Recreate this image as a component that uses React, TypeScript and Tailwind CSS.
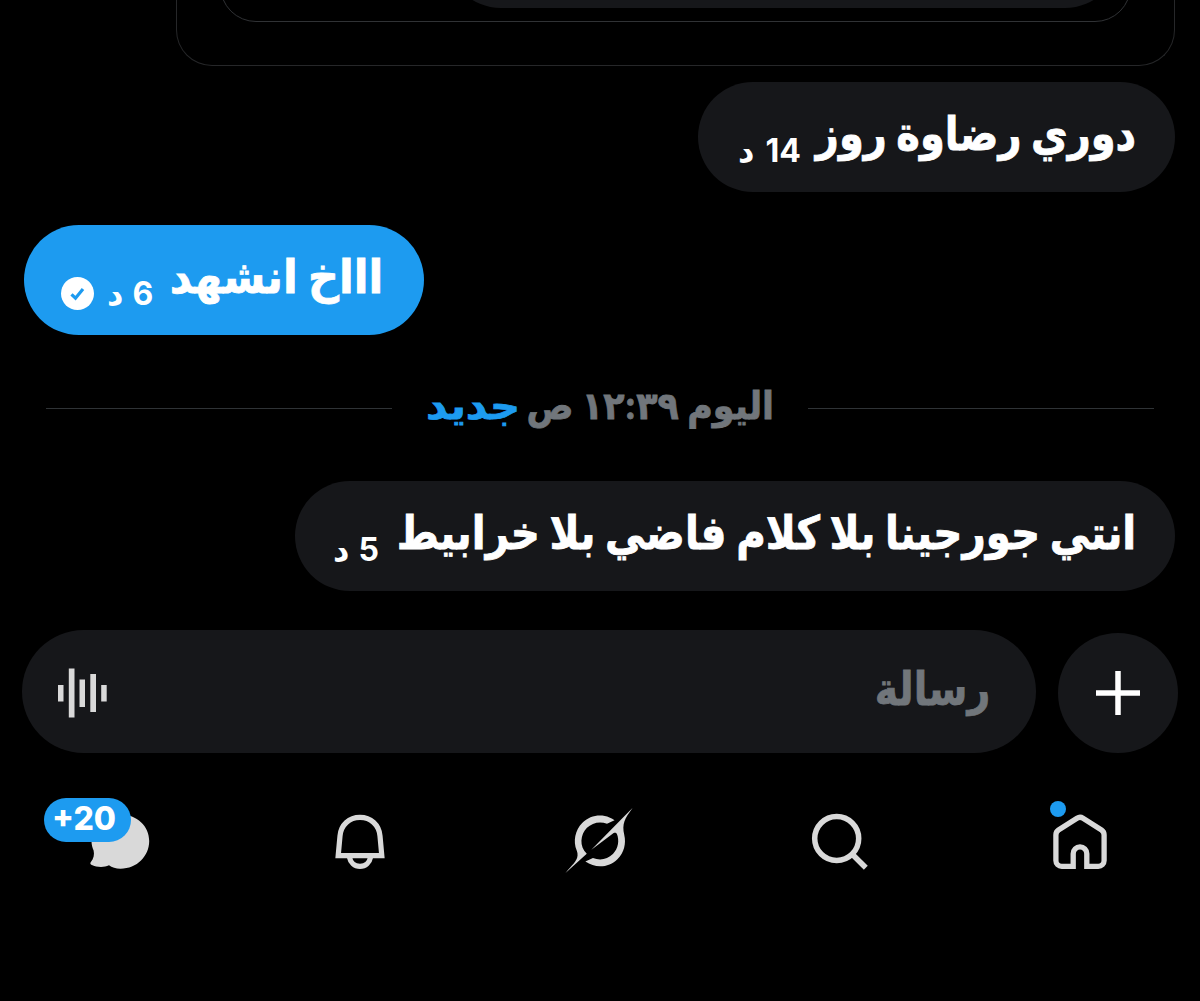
import type { ReactNode } from 'react';

interface MessageProps {
  children: ReactNode;
  time: ReactNode;
  className: string;
  textClass: string;
  timeClass: string;
  scaleClass: string;
}

function Message({ children, time, className, textClass, timeClass, scaleClass }: MessageProps) {
  return (
    <div className={`flex h-[110px] items-center justify-between rounded-full ${className}`}>
      <div className={`flex pb-2 text-[46px] leading-[60px] ${textClass}`}>
        <span className={`shrink-0 origin-right whitespace-nowrap [-webkit-text-stroke:0.8px] ${scaleClass}`}>
          {children}
        </span>
      </div>
      <div className={`flex items-center text-[32px] leading-10 ${timeClass}`}>{time}</div>
    </div>
  );
}

function SeenIcon() {
  return (
    <svg viewBox="0 0 33 33" className="size-[33px]">
      <circle cx="16.5" cy="16.5" r="16.5" fill="#fff" />
      <path d="M10.5 17.300l4 3.900 7.500-9.300" fill="none" stroke="#1d9bf0" strokeWidth="3.200" />
    </svg>
  );
}

function HomeIcon() {
  return (
    <svg viewBox="0 0 60 60" className="size-[60px]" fill="none" stroke="currentColor" strokeWidth="5.3">
      <path d="M23.2 54.3V41.7a6.8 6.8 0 0 1 13.6 0v12.6h11.5a5.8 5.8 0 0 0 5.8-5.8V23a6 6 0 0 0-2.6-5L33 6.2a5.4 5.4 0 0 0-6 0L8.5 18a6 6 0 0 0-2.6 5v25.5a5.8 5.8 0 0 0 5.8 5.8z" />
    </svg>
  );
}

function SearchIcon() {
  return (
    <svg viewBox="0 0 60 60" className="size-[60px]" fill="none" stroke="currentColor" strokeWidth="5.5">
      <circle cx="26.7" cy="26.5" r="22" />
      <path d="M42 42l13.8 13.8" />
    </svg>
  );
}

function GrokIcon() {
  return (
    <svg viewBox="0 0 33 32" className="h-[65px] w-[68px]" fill="currentColor">
      <path d="M12.745 20.54l10.97-8.19c.539-.4 1.307-.244 1.564.38 1.349 3.288.746 7.241-1.938 9.955-2.683 2.714-6.417 3.31-9.83 1.954l-3.728 1.745c5.347 3.697 11.84 2.782 15.898-1.324 3.219-3.255 4.216-7.692 3.284-11.693l.008.009c-1.351-5.878.332-8.227 3.782-13.031L33 0l-4.54 4.59v-.014L12.743 20.544m-2.263 1.987c-3.837-3.707-3.175-9.446.1-12.755 2.42-2.449 6.388-3.448 9.852-1.979l3.72-1.737c-.67-.49-1.53-1.017-2.515-1.387-4.455-1.854-9.789-.931-13.41 2.728-3.483 3.523-4.579 8.94-2.697 13.561 1.405 3.454-.899 5.898-3.22 8.364C1.49 30.2.666 31.074 0 32l10.478-9.466" />
    </svg>
  );
}

function BellIcon() {
  return (
    <svg viewBox="0 0 60 60" className="size-[60px]" fill="none" stroke="currentColor" strokeWidth="5.200">
      <path d="M8.200 43.600L10 24C10.900 12.800 19.300 5.400 30 5.400S49.100 12.800 50 24l1.800 19.600z" />
      <path d="M19.400 45c1 5.600 5.200 9.400 10.600 9.400S39.600 50.600 40.600 45" />
    </svg>
  );
}

function ChatIcon() {
  return (
    <svg viewBox="0 0 60 60" className="size-[60px]" fill="currentColor">
      <path d="M30.500 2.500C14 2.500 1.500 14 1.500 29c0 3.500.8 6.500 2.100 9.500.9 3.800.2 8-2.900 11.800-.7.8-.4 1.900.6 2.400 6 2.900 12.500 2.900 17.700.6 2.900 2.200 6.800 3.400 11.500 3.400C47 56.700 59.200 44 59.200 29S47 2.500 30.500 2.500z" />
    </svg>
  );
}

export default function App() {
  return (
    <div
      dir="rtl"
      className="flex h-[1001px] w-[1200px] flex-col overflow-hidden bg-black font-['Inter','DejaVu_Sans',sans-serif] font-bold text-white"
    >
      {/* bottom edge of the shared post */}
      <div className="mr-[25px] flex h-[66px] w-[999px] shrink-0 justify-center rounded-b-[36px] border-x border-b border-[#262729]">
        <div className="flex h-[22px] w-[911px] items-start justify-center overflow-hidden">
          <div className="flex h-[122px] w-[911px] shrink-0 -translate-y-[100px] items-end justify-start rounded-[36px] border border-[#303235] pb-[13px]">
            <div className="mr-[10px] h-[110px] w-[674px] rounded-full bg-[#16171a]" />
          </div>
        </div>
      </div>

      {/* messages */}
      <div className="flex flex-col px-[25px] pt-4">
        <Message
          className="w-[477px] bg-[#16171a] pr-[39px] pl-[40px]"
          textClass="w-[320px]"
          scaleClass="scale-x-[0.87]"
          timeClass="gap-[11px] pt-7"
          time={<><span>14</span><span>د</span></>}
        >
          دوري رضاوة روز
        </Message>
        <Message
          className="mt-[33px] -ml-px w-[400px] self-end bg-[#1d9bf0] pr-[41px] pl-[37px]"
          textClass="w-[212px]"
          scaleClass="scale-x-[0.935]"
          timeClass="gap-[9px] pt-[27px]"
          time={<><span>6</span><span>د</span><span className="mr-1"><SeenIcon /></span></>}
        >
          اااخ انشهد
        </Message>

        <div className="mt-[43px] flex h-[60px] items-center justify-between pr-[21px] pl-[21px]">
          <div className="h-px w-[346px] bg-[#2f3336]" />
          <div className="flex w-[348px] justify-between pb-1.5 text-[38px] leading-[60px] whitespace-nowrap">
            <div className="flex w-[246px]">
              <span className="shrink-0 origin-right scale-x-[0.92] text-[#71767b] [-webkit-text-stroke:0.8px]">
                اليوم ١٢:٣٩ ص
              </span>
            </div>
            <span className="origin-left scale-x-[1.1] text-[#1d9bf0] [-webkit-text-stroke:0.8px]">جديد</span>
          </div>
          <div className="h-px w-[346px] bg-[#2f3336]" />
        </div>

        <Message
          className="mt-[43px] w-[880px] bg-[#16171a] pr-[39px] pl-[38px]"
          textClass="w-[738px]"
          scaleClass="scale-x-[0.879]"
          timeClass="gap-[9px] pt-7"
          time={<><span>5</span><span>د</span></>}
        >
          انتي جورجينا بلا كلام فاضي بلا خرابيط
        </Message>
      </div>

      {/* composer */}
      <div className="mt-[39px] flex items-end gap-[22px] px-[22px]">
        <button className="flex size-[120px] shrink-0 items-center justify-center rounded-full bg-[#16171a]">
          <svg viewBox="0 0 44 44" className="size-11" stroke="#fff" strokeWidth="5.5">
            <path d="M22 0v44M0 22h44" />
          </svg>
        </button>
        <div className="flex h-[123px] flex-1 items-center justify-between rounded-full bg-[#16171a] pr-[46px] pl-[36px]">
          <span className="origin-right scale-x-[0.86] pb-2 text-[46px] leading-[60px] text-[#71767b] [-webkit-text-stroke:0.8px]">
            رسالة
          </span>
          <svg viewBox="0 0 49 50" className="mt-[3px] h-[50px] w-[49px]" fill="#d9d9d9">
            <path d="M0 17h5.500v16.500H0zM10.800.500h5.700v49h-5.700zM21.500 11.500h5.500V39h-5.500zM32.300 6H38v38h-5.700zM43.200 17h5.500v16.500h-5.500z" />
          </svg>
        </div>
      </div>

      {/* tab bar */}
      <nav className="mt-[55px] flex h-[68px] items-center justify-between px-[90px] text-[#d9d9d9]">
        <button className="relative">
          <HomeIcon />
          <span className="absolute -top-[11px] left-0 size-4 rounded-full bg-[#1d9bf0]" />
        </button>
        <button><SearchIcon /></button>
        <button className="-mr-[3px] -ml-[5px] pb-[3px]"><GrokIcon /></button>
        <button><BellIcon /></button>
        <button className="relative">
          <ChatIcon />
          <span
            dir="ltr"
            className="absolute -top-[14px] -left-[46px] flex h-11 w-[87px] items-center rounded-full bg-[#1d9bf0] pb-0.5 pl-2 text-[32px] leading-none font-extrabold text-white"
          >
            +20
          </span>
        </button>
      </nav>
    </div>
  );
}
